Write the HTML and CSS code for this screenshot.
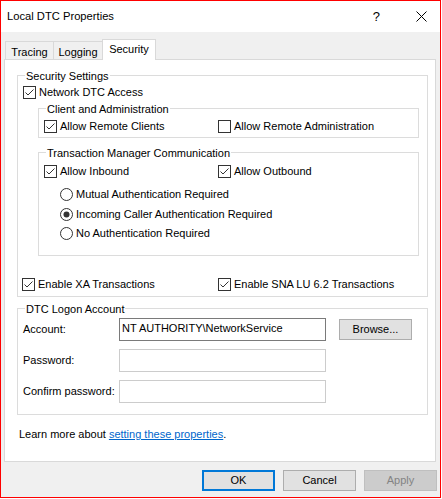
FILE: index.html
```html
<!DOCTYPE html>
<html>
<head>
<meta charset="utf-8">
<link rel="stylesheet" href="styles.css">
</head>
<body>
<div class="window">
  <div class="titlebar">
    <span class="title">Local DTC Properties</span>
    <span class="help">?</span>
    <svg class="close" width="11" height="11" viewBox="0 0 11 11"><path d="M0.5 0.5 L10.5 10.5 M10.5 0.5 L0.5 10.5" stroke="#000" stroke-width="1" fill="none"/></svg>
  </div>
  <div class="body">
    <div class="tabs">
      <div class="tab tab-tracing">Tracing</div>
      <div class="tab tab-logging">Logging</div>
      <div class="tab tab-security active">Security</div>
    </div>
    <div class="panel">
      <div class="group group-security">
        <span class="group-title">Security Settings</span>
        <div class="check-row row-network">
          <svg class="box" width="13" height="13" viewBox="0 0 13 13"><rect x="0.5" y="0.5" width="12" height="12" fill="#fff" stroke="#333"/><polyline points="2.5,6.5 5,9 10.5,3.5" fill="none" stroke="#333" stroke-width="1"/></svg>
          <span class="lbl">Network DTC Access</span>
        </div>
        <div class="group group-inner group-client">
          <span class="group-title">Client and Administration</span>
          <div class="pair pair-client">
            <div class="check-row">
              <svg class="box" width="13" height="13" viewBox="0 0 13 13"><rect x="0.5" y="0.5" width="12" height="12" fill="#fff" stroke="#333"/><polyline points="2.5,6.5 5,9 10.5,3.5" fill="none" stroke="#333" stroke-width="1"/></svg>
              <span class="lbl">Allow Remote Clients</span>
            </div>
            <div class="check-row">
              <svg class="box" width="13" height="13" viewBox="0 0 13 13"><rect x="0.5" y="0.5" width="12" height="12" fill="#fff" stroke="#333"/></svg>
              <span class="lbl">Allow Remote Administration</span>
            </div>
          </div>
        </div>
        <div class="group group-inner group-tmc">
          <span class="group-title">Transaction Manager Communication</span>
          <div class="pair pair-tmc">
            <div class="check-row">
              <svg class="box" width="13" height="13" viewBox="0 0 13 13"><rect x="0.5" y="0.5" width="12" height="12" fill="#fff" stroke="#333"/><polyline points="2.5,6.5 5,9 10.5,3.5" fill="none" stroke="#333" stroke-width="1"/></svg>
              <span class="lbl">Allow Inbound</span>
            </div>
            <div class="check-row">
              <svg class="box" width="13" height="13" viewBox="0 0 13 13"><rect x="0.5" y="0.5" width="12" height="12" fill="#fff" stroke="#333"/><polyline points="2.5,6.5 5,9 10.5,3.5" fill="none" stroke="#333" stroke-width="1"/></svg>
              <span class="lbl">Allow Outbound</span>
            </div>
          </div>
          <div class="radios">
            <div class="check-row radio-row">
              <svg class="box" width="13" height="13" viewBox="0 0 13 13"><circle cx="6.5" cy="6.5" r="6" fill="#fff" stroke="#333"/></svg>
              <span class="lbl">Mutual Authentication Required</span>
            </div>
            <div class="check-row radio-row">
              <svg class="box" width="13" height="13" viewBox="0 0 13 13"><circle cx="6.5" cy="6.5" r="6" fill="#fff" stroke="#333"/><circle cx="6.5" cy="6.5" r="3" fill="#333"/></svg>
              <span class="lbl">Incoming Caller Authentication Required</span>
            </div>
            <div class="check-row radio-row radio-last">
              <svg class="box" width="13" height="13" viewBox="0 0 13 13"><circle cx="6.5" cy="6.5" r="6" fill="#fff" stroke="#333"/></svg>
              <span class="lbl">No Authentication Required</span>
            </div>
          </div>
        </div>
        <div class="pair pair-xa">
          <div class="check-row">
            <svg class="box" width="13" height="13" viewBox="0 0 13 13"><rect x="0.5" y="0.5" width="12" height="12" fill="#fff" stroke="#333"/><polyline points="2.5,6.5 5,9 10.5,3.5" fill="none" stroke="#333" stroke-width="1"/></svg>
            <span class="lbl">Enable XA Transactions</span>
          </div>
          <div class="check-row">
            <svg class="box" width="13" height="13" viewBox="0 0 13 13"><rect x="0.5" y="0.5" width="12" height="12" fill="#fff" stroke="#333"/><polyline points="2.5,6.5 5,9 10.5,3.5" fill="none" stroke="#333" stroke-width="1"/></svg>
            <span class="lbl">Enable SNA LU 6.2 Transactions</span>
          </div>
        </div>
      </div>

      <div class="group group-logon">
        <span class="group-title">DTC Logon Account</span>
        <div class="field-row field-first">
          <span class="field-label">Account:</span>
          <div class="field field-active">NT AUTHORITY\NetworkService</div>
          <div class="btn btn-browse">Browse...</div>
        </div>
        <div class="field-row">
          <span class="field-label">Password:</span>
          <div class="field field-disabled"></div>
        </div>
        <div class="field-row">
          <span class="field-label">Confirm password:</span>
          <div class="field field-disabled"></div>
        </div>
      </div>

      <p class="learn">Learn more about <span class="link">setting these properties</span>.</p>
    </div>
    <div class="buttons">
      <div class="btn btn-ok">OK</div>
      <div class="btn">Cancel</div>
      <div class="btn btn-disabled">Apply</div>
    </div>
  </div>
</div>
</body>
</html>
```
FILE: styles.css
```css
* { box-sizing: border-box; }
html, body { margin: 0; padding: 0; background: #fff; }
body {
  font-family: "Liberation Sans", Arial, sans-serif;
  font-size: 11px;
  color: #000;
}
.window {
  width: 441px;
  height: 498px;
  border: 1px solid #ff0000;
  display: flex;
  flex-direction: column;
  background: #f0f0f0;
}
.titlebar {
  height: 31px;
  flex: none;
  background: #fff;
  display: flex;
  align-items: center;
  padding-left: 6px;
  padding-right: 13px;
}
.title {
  flex: 1;
  font-size: 11.2px;
  line-height: 31px;
}
.help {
  font-size: 13px;
  margin-right: 36px;
  line-height: 31px;
}
.close { display: block; }
.body {
  flex: 1;
  display: flex;
  flex-direction: column;
  background: #f0f0f0;
}
.tabs {
  height: 27px;
  flex: none;
  display: flex;
  align-items: flex-end;
  padding-left: 4px;
}
.tab {
  height: 18px;
  border: 1px solid #d9d9d9;
  border-bottom: none;
  padding-top: 3px;
  line-height: 14px;
  text-align: center;
  background: #f0f0f0;
}
.tab-tracing { width: 49px; }
.tab-logging { width: 50px; margin-left: -1px; }
.tab-security { width: 54px; margin-left: -1px; }
.tab.active {
  height: 21px;
  padding-top: 2px;
  margin-bottom: -1px;
  background: #fff;
  position: relative;
  z-index: 1;
}
.panel {
  width: 432px;
  height: 403px;
  margin-left: 3px;
  border: 1px solid #d9d9d9;
  background: #fff;
  flex: none;
  display: flex;
  flex-direction: column;
  align-items: flex-start;
}
.group {
  position: relative;
  border: 1px solid #dcdcdc;
  flex: none;
}
.group-title {
  position: absolute;
  top: -7px;
  left: 7px;
  padding: 0 1px;
  background: #fff;
  line-height: 14px;
  white-space: nowrap;
}
.group-security {
  margin: 15px 0 0 12px;
  width: 411px;
  height: 222px;
}
.check-row {
  display: flex;
  align-items: center;
  height: 13px;
  white-space: nowrap;
}
.check-row .box { flex: none; display: block; }
.check-row .lbl {
  margin-left: 3px;
  line-height: 13px;
}
.row-network {
  margin-top: 10px;
  padding-left: 5px;
}
.group-inner {
  margin-left: 20px;
  width: 381px;
}
.group-client {
  margin-top: 9px;
  height: 30px;
}
.pair {
  display: grid;
  grid-template-columns: 174px 1fr;
}
.pair-client { margin-top: 11px; padding-left: 5px; }
.group-tmc {
  margin-top: 14px;
  height: 104px;
}
.pair-tmc { margin-top: 12px; padding-left: 5px; }
.radios {
  padding-left: 21px;
  margin-top: 10px;
  display: flex;
  flex-direction: column;
  gap: 7px;
}
.radios .radio-last { margin-top: -1px; }
.pair-xa {
  margin-top: 22px;
  padding-left: 4px;
  grid-template-columns: 196px 1fr;
}
.group-logon {
  margin: 11px 0 0 12px;
  width: 411px;
  height: 107px;
  padding-top: 9px;
  padding-left: 5px;
  display: flex;
  flex-direction: column;
  gap: 8px;
}
.field-row {
  display: flex;
  align-items: center;
  height: 23px;
}
.field-label {
  width: 96px;
  flex: none;
  line-height: 23px;
}
.field {
  width: 207px;
  height: 23px;
  flex: none;
  border: 1px solid #7a7a7a;
  background: #fff;
  padding: 0 2px;
  line-height: 19px;
  white-space: nowrap;
}
.field-disabled { border-color: #cccccc; }
.btn {
  width: 73px;
  height: 21px;
  flex: none;
  border: 1px solid #adadad;
  background: #e1e1e1;
  text-align: center;
  line-height: 19px;
}
.btn-browse { margin-left: 13px; }
.learn {
  margin: 12px 0 0 14px;
  line-height: 14px;
}
.link {
  color: #0066cc;
  text-decoration: underline;
}
.buttons {
  display: flex;
  justify-content: flex-end;
  gap: 8px;
  margin-top: 8px;
  padding-right: 3px;
}
.btn-ok {
  border: 2px solid #0078d7;
  line-height: 17px;
}
.btn-disabled {
  background: #cccccc;
  border-color: #bfbfbf;
  color: #838383;
}
```
